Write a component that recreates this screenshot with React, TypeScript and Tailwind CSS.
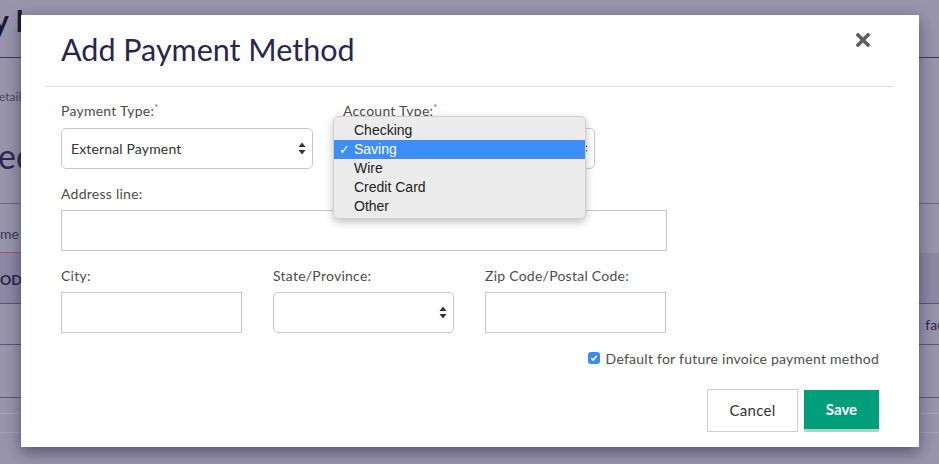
import React from "react";

const LABEL = "text-[14px] leading-[18px] tracking-[0.25px] text-[#4d4d4d] mb-[7px]";
const INPUT = "h-[41px] border border-[#c9c9c9] bg-white";

function Arrows() {
  return (
    <svg width="8" height="13" viewBox="0 0 8 13" className="shrink-0">
      <path d="M4 0.5 L7.5 5 L0.5 5 Z" fill="#333" />
      <path d="M4 12.5 L7.5 8 L0.5 8 Z" fill="#333" />
    </svg>
  );
}

function Req({ children }: { children: React.ReactNode }) {
  return (
    <div className={LABEL}>
      {children}
      <span className="relative -top-[5px] text-[10px] text-[#e8413a]">*</span>
    </div>
  );
}

const OPTIONS = ["Checking", "Saving", "Wire", "Credit Card", "Other"];

function Backdrop() {
  return (
    <div className="text-[#2b2550]">
      <div className="h-[58px] border-b border-[#3b3366] relative">
        <div className="absolute top-[5px] -left-[7px] text-[30px] font-bold leading-none text-[#1c1736]">y I</div>
      </div>
      <div className="h-[78px] pt-[31px] text-[12px] leading-[16px] text-[#4a4566] -ml-[1px]">etail</div>
      <div className="h-[67px] text-[34px] leading-[40px] text-[#2e2852] -ml-[2px]">ed</div>
      <div className="h-[49px] border-t border-[#6e6889] pt-[22px] text-[14px] leading-[16px] text-[#3a3556]">me</div>
      <div className="h-px w-[60px] bg-[#a05468]" />
      <div className="h-[51px] bg-[#8d88a3] border-b border-[#5c567a] flex items-center pt-[2px] text-[14px] font-bold text-[#29234a]">OD</div>
      <div className="h-[41px] border-b border-[#5c567a] flex items-center justify-end text-[14px] text-[#2e2850]">
        <span className="-mr-[6px]">fau</span>
      </div>
      <div className="h-[53px] border-b border-[#5c567a]" />
      <div className="h-[16px] border-b border-[#aaa6bb]" />
      <div className="h-[19px] border-b border-[#a7a3b8]" />
    </div>
  );
}

export default function App() {
  return (
    <div className="relative h-[464px] w-[939px] overflow-hidden bg-[#9995ac] font-['Lato',sans-serif]">
      <Backdrop />

      {/* Modal */}
      <div className="absolute left-[21px] top-[15px] w-[898px] h-[432px] bg-white px-[25px] shadow-[0_5px_15px_rgba(30,25,60,0.55)]">
        <div className="h-[72px] border-b border-[#e3e3e3] px-[15px] flex items-start justify-between">
          <h1 className="mt-[14px] text-[30.5px] leading-[40px] text-[#2b2453]">Add Payment Method</h1>
          <svg width="14" height="14" viewBox="0 0 14 14" className="mt-[18px] mr-[9px]">
            <path d="M2 2 L12 12 M12 2 L2 12" stroke="#5f5f5f" strokeWidth="3.6" strokeLinecap="square" />
          </svg>
        </div>

        <div className="px-[15px] pt-[15px]">
          <div className="flex gap-[30px]">
            <div className="w-[252px]">
              <Req>Payment Type:</Req>
              <div className={`${INPUT} rounded-[5px] flex items-center justify-between pl-[9px] pr-[6px] text-[14px] tracking-[0.15px] text-[#333]`}>
                <span>External Payment</span>
                <Arrows />
              </div>
            </div>
            <div className="w-[252px] relative">
              <Req>Account Type:</Req>
              <div className={`${INPUT} rounded-[5px] flex items-center justify-end pr-[6px]`}>
                <Arrows />
              </div>
              {/* open select menu */}
              <div className="absolute -left-[10px] top-[14px] w-[253px] h-[103px] rounded-[5px] bg-[#ececec] border border-[#d0d0d0] pt-[4px] shadow-[0_3px_8px_rgba(0,0,0,0.25)] font-['Liberation_Sans',Arial,sans-serif] text-[14px] text-[#222]">
                {OPTIONS.map((o) => (
                  <div
                    key={o}
                    className={`h-[19px] leading-[19px] pl-[20px] relative ${o === "Saving" ? "bg-[#3d8ef7] text-white" : ""}`}
                  >
                    {o === "Saving" && <span className="absolute left-[5px] top-0 text-[13px]">✓</span>}
                    {o}
                  </div>
                ))}
              </div>
            </div>
          </div>

          <div className="mt-[16px] w-[606px]">
            <div className={LABEL}>Address line:</div>
            <div className={INPUT} />
          </div>

          <div className="mt-[16px] flex gap-[31px]">
            <div className="w-[181px]">
              <div className={LABEL}>City:</div>
              <div className={INPUT} />
            </div>
            <div className="w-[181px]">
              <div className={LABEL}>State/Province:</div>
              <div className={`${INPUT} rounded-[5px] flex items-center justify-end pr-[6px]`}>
                <Arrows />
              </div>
            </div>
            <div className="w-[181px]">
              <div className={LABEL}>Zip Code/Postal Code:</div>
              <div className={INPUT} />
            </div>
          </div>

          <div className="mt-[16px] h-[18px] flex items-center justify-end gap-[6px] text-[14px] tracking-[0.25px] text-[#4d4d4d]">
            <span className="w-[12px] h-[12px] rounded-[3px] bg-[#3a8cf5] flex items-center justify-center">
              <svg width="8" height="8" viewBox="0 0 8 8">
                <path d="M1.3 4.2 L3.2 6 L6.8 1.8" stroke="#fff" strokeWidth="1.6" fill="none" />
              </svg>
            </span>
            <span>Default for future invoice payment method</span>
          </div>

          <div className="mt-[22px] flex justify-end gap-[6px]">
            <button className="w-[91px] h-[43px] border border-[#cfcfcf] bg-white text-[15px] tracking-[0.3px] text-[#333]">Cancel</button>
            <button className="w-[75px] h-[42px] mt-px bg-[#009e7b] border-b-[3px] border-[#9edbc9] text-[15px] font-bold text-white">Save</button>
          </div>
        </div>
      </div>
    </div>
  );
}
